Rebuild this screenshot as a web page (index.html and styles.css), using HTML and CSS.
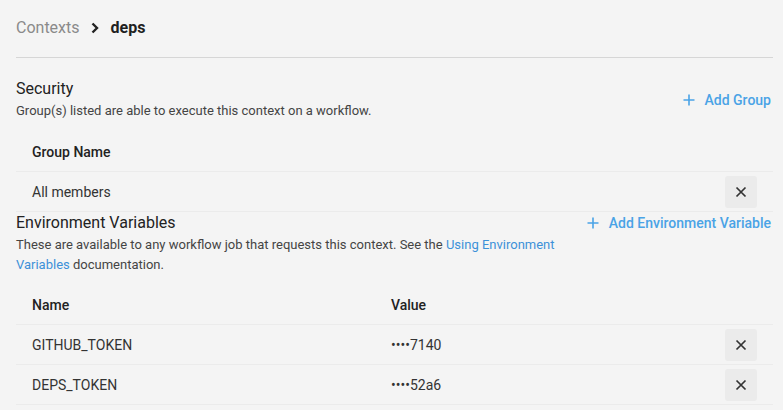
FILE: index.html
```html
<!DOCTYPE html>
<html lang="en">
<head>
<meta charset="utf-8">
<title>Contexts - deps</title>
<link rel="stylesheet" href="styles.css">
</head>
<body>
<div class="page">
  <nav class="crumbs">
    <span class="crumb-parent">Contexts</span>
    <svg class="chev" width="10" height="12" viewBox="0 0 10 12"><path d="M2.5 1.5 L7 6 L2.5 10.5" fill="none" stroke="#222" stroke-width="2.4"/></svg>
    <span class="crumb-current">deps</span>
  </nav>

  <section class="section">
    <div class="section-head center">
      <div>
        <h2 class="title">Security</h2>
        <p class="desc">Group(s) listed are able to execute this context on a workflow.</p>
      </div>
      <a class="add" href="#"><svg width="12" height="12" viewBox="0 0 12 12"><path d="M6 0.5V11.5M0.5 6H11.5" stroke="currentColor" stroke-width="1.6"/></svg>Add Group</a>
    </div>
    <div class="table group-table">
      <div class="row head"><div class="cell">Group Name</div><div class="cell act"></div></div>
      <div class="row"><div class="cell">All members</div><div class="cell act"><button class="del" aria-label="Remove"><svg width="12" height="12" viewBox="0 0 12 12"><path d="M1.5 1.5L10.5 10.5M10.5 1.5L1.5 10.5" stroke="#333" stroke-width="1.7"/></svg></button></div></div>
    </div>
  </section>

  <section class="section env">
    <div class="section-head top">
      <div class="head-text">
        <h2 class="title">Environment Variables</h2>
        <p class="desc">These are available to any workflow job that requests this context. See the <a href="#" class="link">Using Environment Variables</a> documentation.</p>
      </div>
      <a class="add" href="#"><svg width="12" height="12" viewBox="0 0 12 12"><path d="M6 0.5V11.5M0.5 6H11.5" stroke="currentColor" stroke-width="1.6"/></svg>Add Environment Variable</a>
    </div>
    <div class="table env-table">
      <div class="row head"><div class="cell">Name</div><div class="cell">Value</div><div class="cell act"></div></div>
      <div class="row"><div class="cell">GITHUB_TOKEN</div><div class="cell">••••7140</div><div class="cell act"><button class="del" aria-label="Remove"><svg width="12" height="12" viewBox="0 0 12 12"><path d="M1.5 1.5L10.5 10.5M10.5 1.5L1.5 10.5" stroke="#333" stroke-width="1.7"/></svg></button></div></div>
      <div class="row"><div class="cell">DEPS_TOKEN</div><div class="cell">••••52a6</div><div class="cell act"><button class="del" aria-label="Remove"><svg width="12" height="12" viewBox="0 0 12 12"><path d="M1.5 1.5L10.5 10.5M10.5 1.5L1.5 10.5" stroke="#333" stroke-width="1.7"/></svg></button></div></div>
    </div>
  </section>
</div>
</body>
</html>
```

FILE: styles.css
```css
html, body {
  margin: 0;
  padding: 0;
  background: #f4f4f4;
  font-family: Roboto, "Liberation Sans", Arial, sans-serif;
  color: #333;
}

.page {
  padding: 0 10px 0 16px;
}

.crumbs {
  display: flex;
  align-items: center;
  height: 58px;
  border-bottom: 1px solid #d6d6d6;
  font-size: 16px;
  line-height: 20px;
  padding-bottom: 1px;
  box-sizing: border-box;
}

.crumb-parent { color: #8a8a8a; }
.chev { margin: 0 11px 0 10px; }
.crumb-current { color: #1f1f1f; font-weight: 700; }

.section-head {
  display: flex;
  justify-content: space-between;
}
.section-head.center { align-items: center; }
.section-head.top { align-items: flex-start; }

.section { padding-top: 21px; }
.section.env { padding-top: 1px; }

.title {
  margin: 0 0 2px;
  font-size: 16px;
  line-height: 20px;
  font-weight: 400;
  color: #222;
}

.desc {
  margin: 0;
  font-size: 13px;
  line-height: 20px;
  color: #444;
}

.head-text { max-width: 560px; }

.link { color: #3d91d8; text-decoration: none; }

.add {
  display: flex;
  align-items: center;
  gap: 10px;
  color: #4aa3e6;
  font-size: 14px;
  font-weight: 500;
  line-height: 20px;
  text-decoration: none;
  white-space: nowrap;
  padding-right: 2px;
}

.table { margin-top: 11px; }
.env-table { margin-top: 10px; }

.row {
  display: grid;
  align-items: center;
  height: 40px;
  border-bottom: 1px solid #ebebeb;
  font-size: 14px;
  color: #333;
  box-sizing: border-box;
}
.group-table .row { grid-template-columns: 1fr 48px; }
.env-table .row { grid-template-columns: 359px 1fr 48px; }

.row.head {
  font-weight: 500;
  color: #222;
}

.cell { padding-left: 16px; }
.cell.act { padding-left: 0; display: flex; }

.del {
  width: 32px;
  height: 32px;
  border: none;
  border-radius: 3px;
  background: #ebebeb;
  display: flex;
  align-items: center;
  justify-content: center;
  padding: 0;
}
```
